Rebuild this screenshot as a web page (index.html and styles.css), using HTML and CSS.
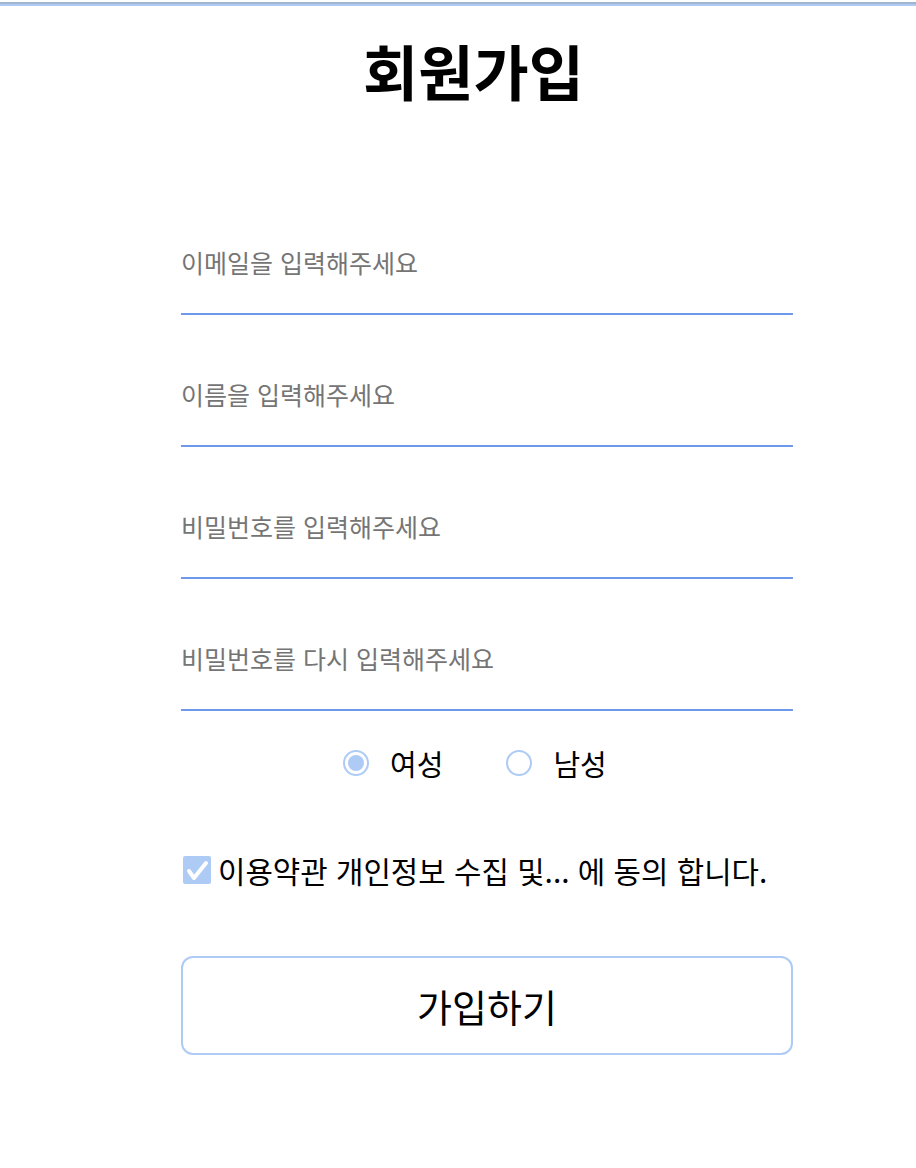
FILE: index.html
```html
<!DOCTYPE html>
<html lang="ko">
<head>
    <meta charset="UTF-8">
    <meta name="viewport" content="width=device-width, initial-scale=1.0">
    <title>회원가입</title>
    <link rel="stylesheet" href="styles.css">
</head>
<body>
    <div class="top-bar"></div>
    <div class="container">
        <h1>회원가입</h1>
        <form id="joinForm" class="join-form">
            <input type="email" class="field" placeholder="이메일을 입력해주세요">
            <input type="text" class="field" placeholder="이름을 입력해주세요">
            <input type="password" class="field" placeholder="비밀번호를 입력해주세요">
            <input type="password" class="field" placeholder="비밀번호를 다시 입력해주세요">

            <div class="gender">
                <label class="radio">
                    <input type="radio" name="gender" value="female" checked>
                    <span class="dot"></span>
                    여성
                </label>
                <label class="radio">
                    <input type="radio" name="gender" value="male">
                    <span class="dot"></span>
                    남성
                </label>
            </div>

            <label class="agree">
                <input type="checkbox" checked>
                <span class="box">
                    <svg width="28" height="28" viewBox="0 0 28 28">
                        <path d="M6 15 L11 22 L23 7" fill="none" stroke="#fff" stroke-width="4" stroke-linecap="round" stroke-linejoin="round"/>
                    </svg>
                </span>
                이용약관 개인정보 수집 및... 에 동의 합니다.
            </label>

            <button type="submit">가입하기</button>
        </form>
    </div>
</body>
</html>
```

FILE: styles.css
```css
body {
    font-family: "Noto Sans CJK KR", "Noto Sans", sans-serif;
    background-color: #fff;
    color: #000;
    margin: 0;
    padding: 0;
}
.top-bar {
    margin-top: 2px;
    height: 0;
    border-top: 2px solid #a3b4cf;
    border-bottom: 2px solid #aecbf6;
}
.container {
    width: 612px;
    margin-left: 181px;
}
h1 {
    font-size: 60px;
    font-weight: 700;
    text-align: center;
    margin: 0 0 0 -27px;
    line-height: 64px;
    padding-top: 32px;
}
.join-form {
    display: flex;
    flex-direction: column;
    padding-top: 109px;
}
.field {
    height: 104px;
    box-sizing: border-box;
    border: none;
    border-bottom: 2px solid #6d9aea;
    padding: 0;
    margin-top: 28px;
    font-family: inherit;
    font-size: 25px;
    outline: none;
}
.field:first-child {
    margin-top: 0;
}
.field::placeholder {
    color: #757575;
}
.gender {
    display: flex;
    gap: 63px;
    margin-top: 24px;
    padding-left: 162px;
    height: 56px;
    align-items: center;
}
.radio {
    display: flex;
    align-items: center;
    gap: 21px;
    font-size: 29px;
    cursor: pointer;
}
.radio input,
.agree input {
    display: none;
}
.dot {
    width: 22px;
    height: 22px;
    border: 2px solid #aecbf6;
    border-radius: 50%;
    position: relative;
}
.radio input:checked + .dot::after {
    content: "";
    position: absolute;
    left: 3px;
    top: 3px;
    width: 16px;
    height: 16px;
    border-radius: 50%;
    background-color: #aecbf6;
}
.agree {
    display: flex;
    align-items: center;
    gap: 7px;
    height: 44px;
    margin-top: 57px;
    font-size: 29.8px;
    cursor: pointer;
}
.box {
    width: 28px;
    height: 28px;
    margin-left: 2px;
    background-color: #aecbf6;
    border-radius: 2px;
}
.box svg {
    display: block;
}
button {
    margin-top: 64px;
    height: 99px;
    background-color: #fff;
    border: 2px solid #aecbf6;
    border-radius: 12px;
    font-family: inherit;
    font-size: 38px;
    color: #000;
    cursor: pointer;
}
```
